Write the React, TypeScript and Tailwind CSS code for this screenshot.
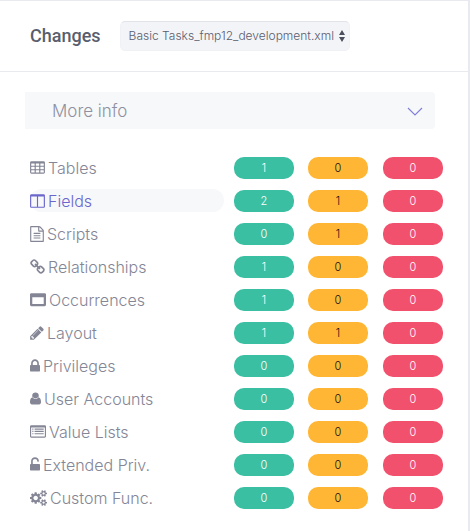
import type { ReactNode } from "react";

interface ChangeRow {
  label: string;
  icon: ReactNode;
  added: number;
  modified: number;
  removed: number;
  active?: boolean;
}

interface GlyphProps {
  viewBox: string;
  d: string;
  className: string;
}

function Glyph({ viewBox, d, className }: GlyphProps) {
  return (
    <svg
      viewBox={viewBox}
      className={`h-4 shrink-0 ${className}`}
      fill="currentColor"
      fillRule="evenodd"
      aria-hidden="true"
    >
      <path d={d} />
    </svg>
  );
}

const icons = {
  table: (
    <Glyph
      className="w-[15px]"
      viewBox="0 0 1664 1792"
      d="M160 128h1344q66 0 113 47t47 113v1088q0 66-47 113t-113 47h-1344q-66 0-113-47t-47-113v-1088q0-66 47-113t113-47zM128 416v192q0 32 32 32h320q32 0 32-32v-192q0-32-32-32h-320q-32 0-32 32zM640 416v192q0 32 32 32h320q32 0 32-32v-192q0-32-32-32h-320q-32 0-32 32zM1152 416v192q0 32 32 32h320q32 0 32-32v-192q0-32-32-32h-320q-32 0-32 32zM128 800v192q0 32 32 32h320q32 0 32-32v-192q0-32-32-32h-320q-32 0-32 32zM640 800v192q0 32 32 32h320q32 0 32-32v-192q0-32-32-32h-320q-32 0-32 32zM1152 800v192q0 32 32 32h320q32 0 32-32v-192q0-32-32-32h-320q-32 0-32 32zM128 1184v192q0 32 32 32h320q32 0 32-32v-192q0-32-32-32h-320q-32 0-32 32zM640 1184v192q0 32 32 32h320q32 0 32-32v-192q0-32-32-32h-320q-32 0-32 32zM1152 1184v192q0 32 32 32h320q32 0 32-32v-192q0-32-32-32h-320q-32 0-32 32z"
    />
  ),
  columns: (
    <Glyph
      className="w-[15px]"
      viewBox="0 0 1664 1792"
      d="M160 128h1344q66 0 113 47t47 113v1216q0 66-47 113t-113 47h-1344q-66 0-113-47t-47-113v-1216q0-66 47-113t113-47zM128 384v1120q0 32 32 32h608v-1152zM896 384v1152h608q32 0 32-32v-1120z"
    />
  ),
  file: (
    <Glyph
      className="w-[14px]"
      viewBox="0 0 1536 1792"
      d="M1468 380q28 28 48 76t20 88v1152q0 40-28 68t-68 28h-1344q-40 0-68-28t-28-68v-1600q0-40 28-68t68-28h896q40 0 88 20t76 48zm-444-244v376h376q-10-29-22-41l-313-313q-12-12-41-22zm384 1528v-1024h-416q-40 0-68-28t-28-68v-416h-768v1536h1280zM384 800q0-32 32-32h704q32 0 32 32v64q0 32-32 32h-704q-32 0-32-32zM384 1056q0-32 32-32h704q32 0 32 32v64q0 32-32 32h-704q-32 0-32-32zM384 1312q0-32 32-32h704q32 0 32 32v64q0 32-32 32h-704q-32 0-32-32z"
    />
  ),
  chain: (
    <Glyph
      className="w-[15px]"
      viewBox="0 0 1664 1792"
      d="M1456 1216q0-40-28-68l-208-208q-28-28-68-28-42 0-72 32 3 3 19 18.500t21.500 21.500 15 19 13 25.500 3.500 27.500q0 40-28 68t-68 28q-15 0-27.500-3.500t-25.500-13-19-15-21.500-21.500-18.500-19q-33 31-33 73 0 40 28 68l206 207q27 27 68 27 40 0 68-26l147-146q28-28 28-67zm-703-705q0-40-28-68l-206-207q-28-28-68-28-39 0-68 27l-147 146q-28 28-28 67 0 40 28 68l208 208q27 27 68 27 42 0 72-31-3-3-19-18.500t-21.500-21.500-15-19-13-25.500-3.500-27.500q0-40 28-68t68-28q15 0 27.500 3.500t25.500 13 19 15 21.500 21.500 18.500 19q33-31 33-73zm895 705q0 120-85 203l-147 146q-83 83-203 83-121 0-204-85l-206-207q-83-83-83-203 0-123 88-209l-88-88q-86 88-208 88-120 0-204-84l-208-208q-84-84-84-204t85-203l147-146q83-83 203-83 121 0 204 85l206 207q83 83 83 203 0 123-88 209l88 88q86-88 208-88 120 0 204 84l208 208q84 84 84 204z"
    />
  ),
  window: (
    <Glyph
      className="w-4"
      viewBox="0 0 1792 1792"
      d="M160 128h1472q66 0 113 47t47 113v1152q0 66-47 113t-113 47h-1472q-66 0-113-47t-47-113v-1152q0-66 47-113t113-47zM256 576v768h1280v-768z"
    />
  ),
  pencil: (
    <Glyph
      className="w-[14px]"
      viewBox="0 0 1536 1792"
      d="M363 1536l91-91-235-235-91 91v107h128v128h107zm523-928q0-22-22-22-10 0-17 7l-542 542q-7 7-7 17 0 22 22 22 10 0 17-7l542-542q7-7 7-17zm-54-192l416 416-832 832h-416v-416zm683 96q0 53-37 90l-166 166-416-416 166-165q36-38 90-38 53 0 91 38l235 234q37 39 37 91z"
    />
  ),
  lock: (
    <Glyph
      className="w-[10px]"
      viewBox="0 0 1152 1792"
      d="M320 768h512v-192q0-106-75-181t-181-75-181 75-75 181v192zm832 96v576q0 40-28 68t-68 28h-960q-40 0-68-28t-28-68v-576q0-40 28-68t68-28h32v-192q0-184 132-316t316-132 316 132 132 316v192h32q40 0 68 28t28 68z"
    />
  ),
  user: (
    <Glyph
      className="w-[11px]"
      viewBox="0 0 1280 1792"
      d="M1280 1271q0 109-62.500 187t-150.500 78h-854q-88 0-150.500-78t-62.500-187q0-85 8.500-160.500t31.500-152 58.500-131 94-89 134.500-34.500q131 128 313 128t313-128q76 0 134.500 34.500t94 89 58.500 131 31.500 152 8.500 160.500zm-256-759q0 159-112.500 271.500t-271.500 112.500-271.500-112.500-112.500-271.500 112.500-271.500 271.500-112.500 271.500 112.500 112.500 271.500z"
    />
  ),
  list: (
    <Glyph
      className="w-4"
      viewBox="0 0 1792 1792"
      d="M160 128h1472q66 0 113 47t47 113v1088q0 66-47 113t-113 47h-1472q-66 0-113-47t-47-113v-1088q0-66 47-113t113-47zM128 416v928q0 64 32 64h1472q32 0 32-64v-928q0-32-32-32h-1472q-32 0-32 32zM256 512h128v128h-128zM512 512h1024v128h-1024zM256 768h128v128h-128zM512 768h1024v128h-1024zM256 1024h128v128h-128zM512 1024h1024v128h-1024z"
    />
  ),
  unlock: (
    <Glyph
      className="w-[10px]"
      viewBox="0 0 1152 1792"
      d="M1056 768q40 0 68 28t28 68v576q0 40-28 68t-68 28h-960q-40 0-68-28t-28-68v-576q0-40 28-68t68-28h32v-320q0-185 131.500-316.500t316.500-131.500 316.500 131.500 131.500 316.500q0 26-19 45t-45 19h-64q-26 0-45-19t-19-45q0-106-75-181t-181-75-181 75-75 181v320h736z"
    />
  ),
  cogs: (
    <Glyph
      className="w-[17px]"
      viewBox="0 0 1920 1792"
      d="M896 896q0-106-75-181t-181-75-181 75-75 181 75 181 181 75 181-75 75-181zm768 512q0-52-38-90t-90-38-90 38-38 90q0 53 37.500 90.500t90.500 37.500 90.500-37.500 37.500-90.500zm0-1024q0-52-38-90t-90-38-90 38-38 90q0 53 37.500 90.500t90.500 37.500 90.500-37.500 37.500-90.500zm-384 421v185q0 10-7 19.500t-16 10.500l-155 24q-11 35-32 76 34 48 90 115 7 11 7 20 0 12-7 19-23 30-82.500 89.500t-78.500 59.500q-11 0-21-7l-115-90q-37 19-77 31-11 108-23 155-7 24-30 24h-186q-11 0-20-7.500t-10-17.500l-23-153q-34-10-75-31l-118 89q-7 7-20 7-11 0-21-8-144-133-144-160 0-9 7-19 10-14 41-53t47-61q-23-44-35-82l-152-24q-10-1-17-9.500t-7-19.500v-185q0-10 7-19.500t16-10.500l155-24q11-35 32-76-34-48-90-115-7-11-7-20 0-12 7-20 22-30 82-89t79-59q11 0 21 7l115 90q34-18 77-32 11-108 23-154 7-24 30-24h186q11 0 20 7.500t10 17.500l23 153q34 10 75 31l118-89q8-7 20-7 11 0 21 8 144 133 144 160 0 8-7 19-12 16-42 54t-45 60q23 48 34 82l152 23q10 2 17 10.500t7 19.500zm640 533v140q0 16-149 31-12 27-30 52 51 113 51 138 0 4-4 7-122 71-124 71-8 0-46-47t-52-68q-20 2-30 2t-30-2q-14 21-52 68t-46 47q-2 0-124-71-4-3-4-7 0-25 51-138-18-25-30-52-149-15-149-31v-140q0-16 149-31 13-29 30-52-51-113-51-138 0-4 4-7 4-2 35-20t59-34 30-16q8 0 46 46.500t52 67.500q20-2 30-2t30 2q51-71 92-112l6-2q4 0 124 70 4 3 4 7 0 25-51 138 17 23 30 52 149 15 149 31zm0-1024v140q0 16-149 31-12 27-30 52 51 113 51 138 0 4-4 7-122 71-124 71-8 0-46-47t-52-68q-20 2-30 2t-30-2q-14 21-52 68t-46 47q-2 0-124-71-4-3-4-7 0-25 51-138-18-25-30-52-149-15-149-31v-140q0-16 149-31 13-29 30-52-51-113-51-138 0-4 4-7 4-2 35-20t59-34 30-16q8 0 46 46.500t52 67.500q20-2 30-2t30 2q51-71 92-112l6-2q4 0 124 70 4 3 4 7 0 25-51 138 17 23 30 52 149 15 149 31z"
    />
  ),
};

const rows: ChangeRow[] = [
  { label: "Tables", icon: icons.table, added: 1, modified: 0, removed: 0 },
  { label: "Fields", icon: icons.columns, added: 2, modified: 1, removed: 0, active: true },
  { label: "Scripts", icon: icons.file, added: 0, modified: 1, removed: 0 },
  { label: "Relationships", icon: icons.chain, added: 1, modified: 0, removed: 0 },
  { label: "Occurrences", icon: icons.window, added: 1, modified: 0, removed: 0 },
  { label: "Layout", icon: icons.pencil, added: 1, modified: 1, removed: 0 },
  { label: "Privileges", icon: icons.lock, added: 0, modified: 0, removed: 0 },
  { label: "User Accounts", icon: icons.user, added: 0, modified: 0, removed: 0 },
  { label: "Value Lists", icon: icons.list, added: 0, modified: 0, removed: 0 },
  { label: "Extended Priv.", icon: icons.unlock, added: 0, modified: 0, removed: 0 },
  { label: "Custom Func.", icon: icons.cogs, added: 0, modified: 0, removed: 0 },
];

function Pill({ value, className }: { value: number; className: string }) {
  return (
    <span
      className={`ml-auto flex h-[22px] w-[60px] items-center justify-center rounded-[10px] pt-px text-[11px] font-light ${className}`}
    >
      {value}
    </span>
  );
}

export default function App() {
  return (
    <main className="border-t border-r-2 border-b border-[#e9e9f0] bg-white font-['Inter',sans-serif]">
      <header className="flex h-[71px] items-center gap-[19px] border-b border-[#e9eaed] px-[30px]">
        <h1 className="font-['Roboto',sans-serif] text-lg font-medium text-[#595d6e]">Changes</h1>
        <div className="relative">
          <select
            aria-label="Changed file"
            className="h-[30px] w-[230px] appearance-none rounded-[5px] border border-t-[#e2e3e8] border-[#f0f1f5] bg-[#f3f4f8] pr-3 pl-2 font-['Inter',sans-serif] text-xs font-light text-[#595d6e]"
          >
            <option>Basic Tasks_fmp12_development.xml</option>
          </select>
          <svg
            viewBox="0 0 6 12"
            className="pointer-events-none absolute top-[9px] right-[5px] h-3 w-[6px]"
            fill="#4b4e5c"
            aria-hidden="true"
          >
            <path d="M3 0l3 5H0zM3 12L0 7h6z" />
          </svg>
        </div>
      </header>

      <div className="px-[25px] pt-5 pb-[18px]">
        <button
          type="button"
          className="mr-2 flex h-[37px] w-[calc(100%-8px)] items-center justify-between rounded-r-[4px] bg-[#f7f8fa] pt-0.5 pr-3 pl-[27px] text-[17px] font-light text-[#8f91a0]"
        >
          More info
          <svg viewBox="0 0 16 10" className="h-[10px] w-4" fill="none" stroke="#8280d8" aria-hidden="true">
            <path d="M1 1l7 7 7-7" strokeWidth="1.200" />
          </svg>
        </button>

        <div className="pt-[22px] pl-[5px]">
          <table className="w-full table-fixed border-collapse">
            <colgroup>
              <col />
              <col className="w-[70px]" />
              <col className="w-[74px]" />
              <col className="w-[75px]" />
            </colgroup>
            <tbody>
              {rows.map((row) => (
                <tr key={row.label} className="h-[33px]">
                  <th scope="row" className="p-0 text-left font-normal">
                    <a
                      href="#"
                      className={`flex h-[23px] items-center gap-[3px] rounded-full text-base font-light whitespace-nowrap ${
                        row.active ? "bg-[#f7f8fa] text-[#6a66cc]" : "text-[#848696]"
                      }`}
                    >
                      {row.icon}
                      {row.label}
                    </a>
                  </th>
                  <td className="p-0">
                    <Pill value={row.added} className="bg-[#3bbfa3] text-white" />
                  </td>
                  <td className="p-0">
                    <Pill value={row.modified} className="bg-[#ffb634] text-[#111111]" />
                  </td>
                  <td className="p-0">
                    <Pill value={row.removed} className="bg-[#f2516d] text-white" />
                  </td>
                </tr>
              ))}
            </tbody>
          </table>
        </div>
      </div>
    </main>
  );
}
